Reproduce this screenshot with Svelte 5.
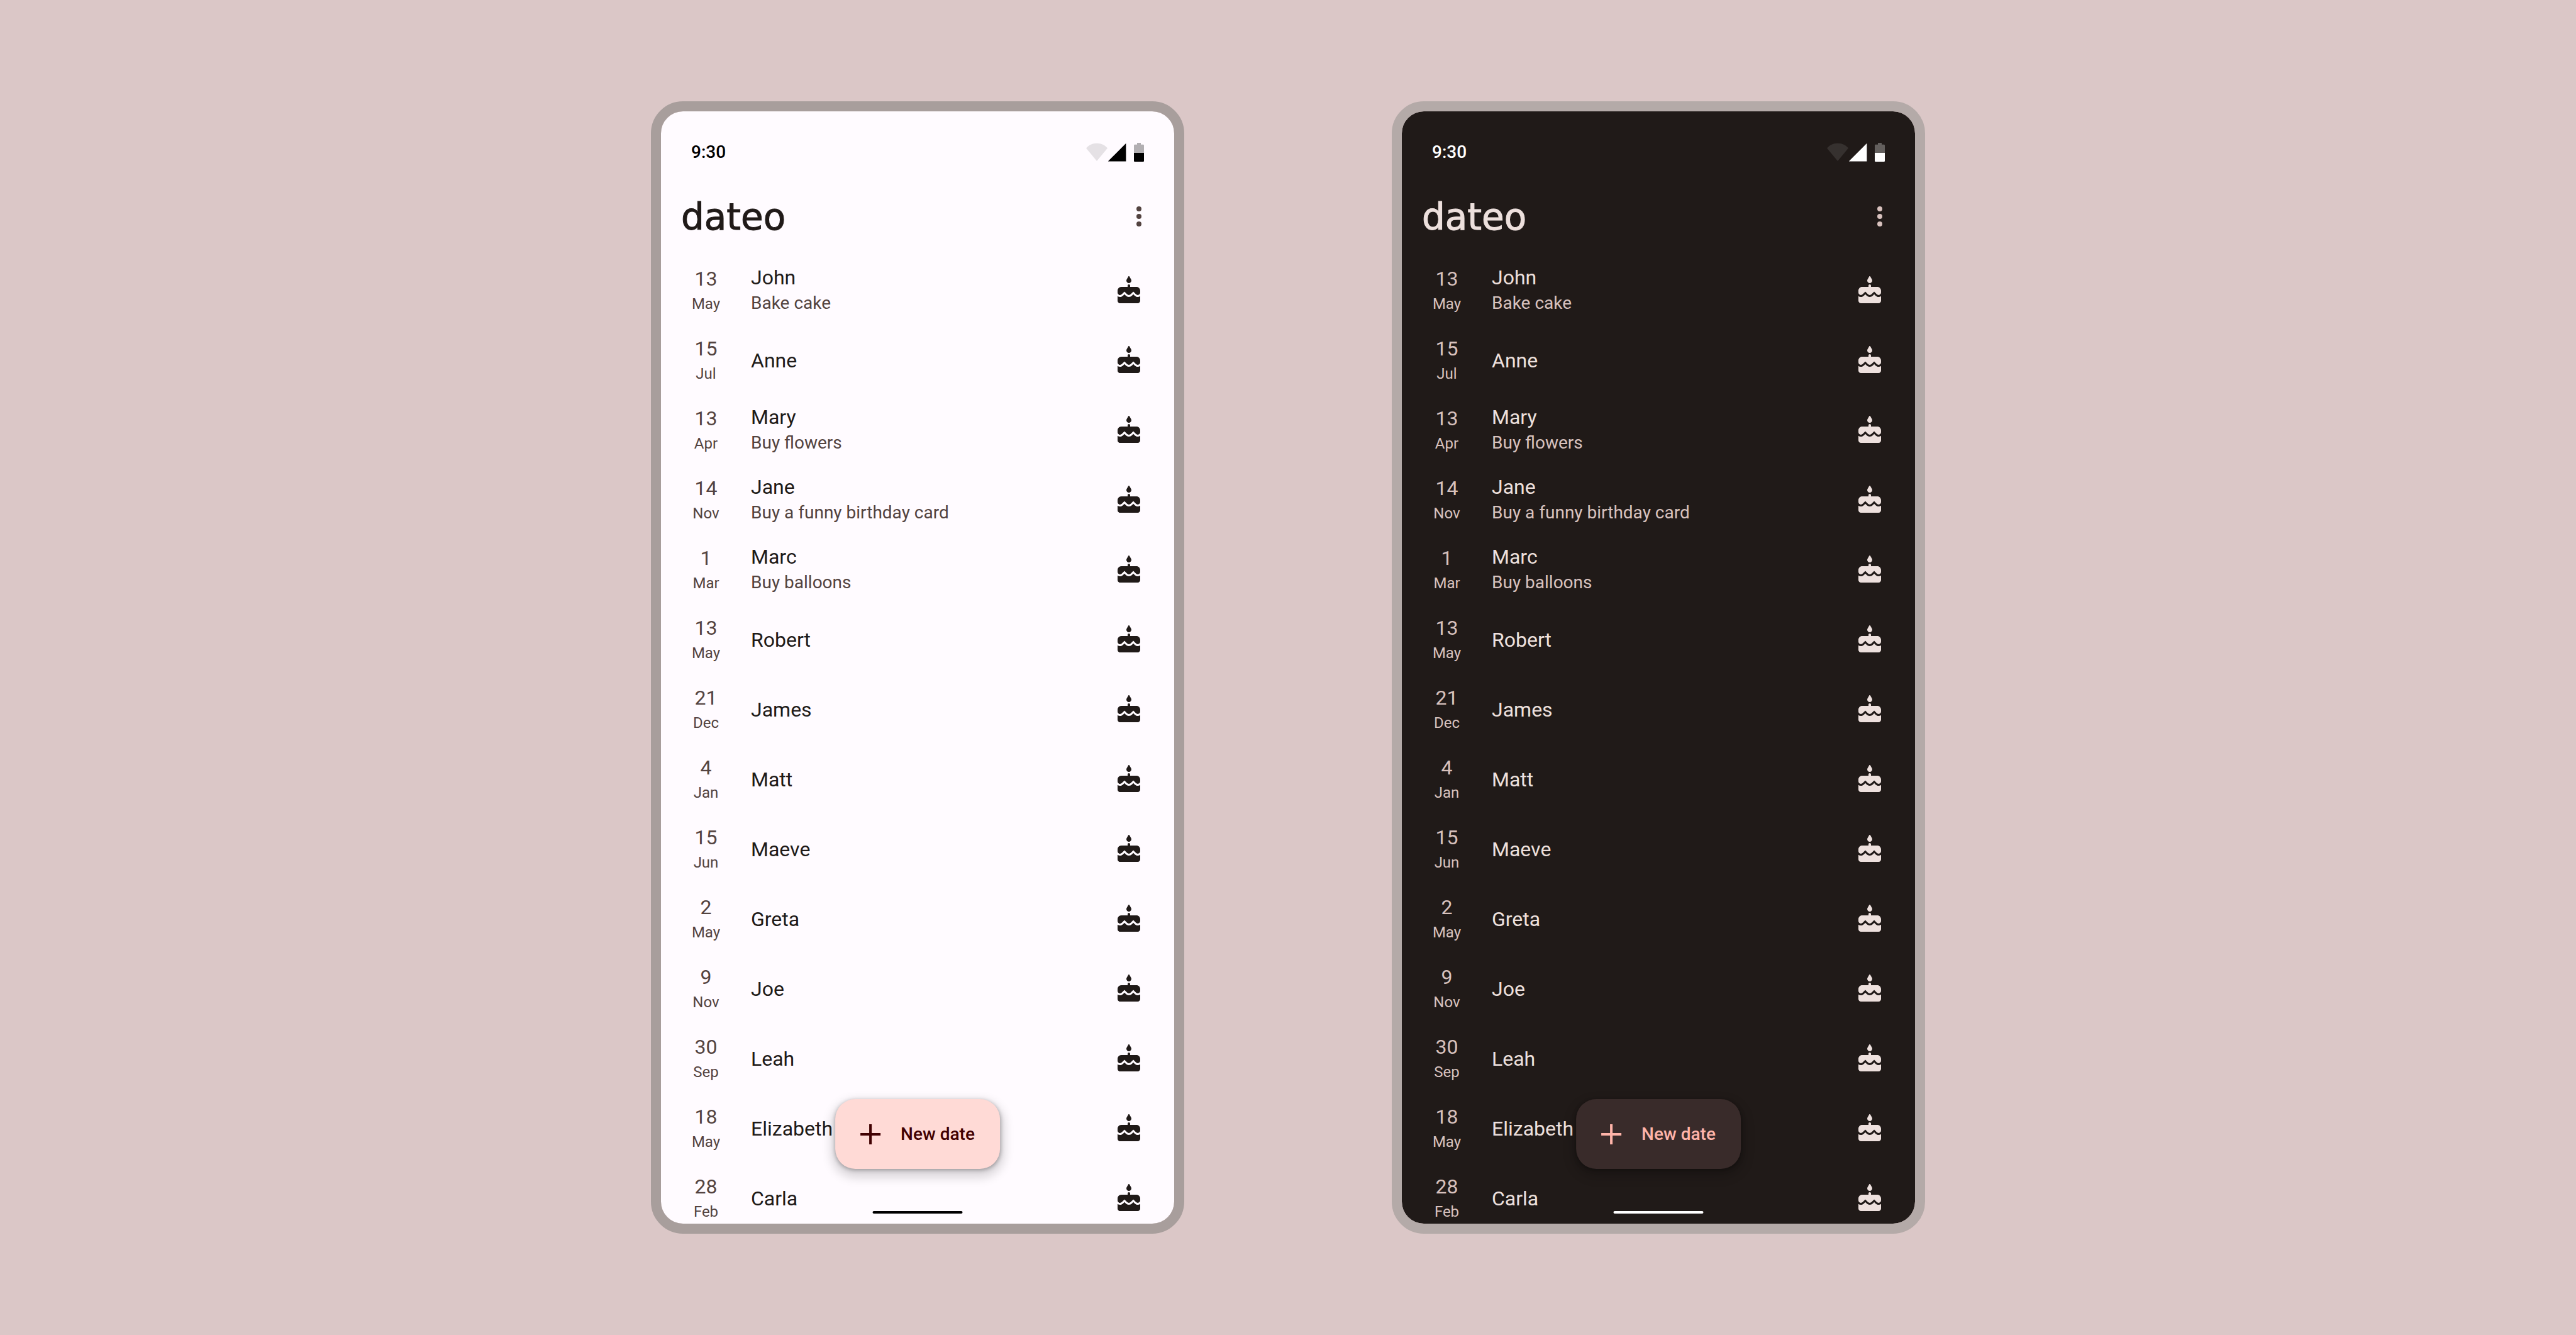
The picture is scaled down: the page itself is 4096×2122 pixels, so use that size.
<script>
  const dates = [
    { day: 13, month: 'May', name: 'John', note: 'Bake cake' },
    { day: 15, month: 'Jul', name: 'Anne' },
    { day: 13, month: 'Apr', name: 'Mary', note: 'Buy flowers' },
    { day: 14, month: 'Nov', name: 'Jane', note: 'Buy a funny birthday card' },
    { day: 1, month: 'Mar', name: 'Marc', note: 'Buy balloons' },
    { day: 13, month: 'May', name: 'Robert' },
    { day: 21, month: 'Dec', name: 'James' },
    { day: 4, month: 'Jan', name: 'Matt' },
    { day: 15, month: 'Jun', name: 'Maeve' },
    { day: 2, month: 'May', name: 'Greta' },
    { day: 9, month: 'Nov', name: 'Joe' },
    { day: 30, month: 'Sep', name: 'Leah' },
    { day: 18, month: 'May', name: 'Elizabeth' },
    { day: 28, month: 'Feb', name: 'Carla' }
  ];
  const themes = ['light', 'dark'];
</script>

<main class="stage">
  {#each themes as theme}
    <section class="phone {theme}" aria-label="dateo, {theme} theme">
      <div class="status">
        <span class="time">9:30</span>
        <svg class="indicators" viewBox="0 0 46 15" aria-hidden="true">
          <path opacity=".1" d="M8.5 14.5 0 4.3C1.8 2 4.8.4 8.5.4S15.200 2 17 4.300Z" />
          <path d="M17.400 14.700 31.700.400V14.700Z" />
          <path opacity=".3" d="M38 8.050V2.200c0-.5.3-.8.8-.8h1.700V0h3v1.400h1.700c.5 0 .8.3.8.8v5.850Z" />
          <path d="M38 8.050h8v6.150c0 .5-.3.8-.8.8h-6.400c-.5 0-.8-.3-.8-.8Z" />
        </svg>
      </div>

      <header class="bar">
        <h1>dateo</h1>
        <button class="more" type="button" aria-label="More options">
          <svg viewBox="0 0 24 24" aria-hidden="true">
            <circle cx="12" cy="6" r="2" />
            <circle cx="12" cy="12" r="2" />
            <circle cx="12" cy="18" r="2" />
          </svg>
        </button>
      </header>

      <ul class="list">
        {#each dates as item}
          <li class="row">
            <div class="date">
              <span class="day">{item.day}</span>
              <span class="month">{item.month}</span>
            </div>
            <div class="text">
              <span class="name">{item.name}</span>
              {#if item.note}<span class="note">{item.note}</span>{/if}
            </div>
            <svg class="cake" viewBox="0 0 24 24" aria-hidden="true">
              <path d="M12 6c1.110 0 2-.9 2-2 0-.38-.1-.73-.29-1.030L12.430.750c-.19-.33-.67-.33-.86 0l-1.280 2.220C10.100 3.270 10 3.620 10 4c0 1.100.9 2 2 2z" />
              <path d="M18 9h-5V8c0-.55-.45-1-1-1s-1 .45-1 1v1H6c-1.660 0-3 1.340-3 3v1.540c0 1.080.88 1.960 1.960 1.960.52 0 1.020-.2 1.380-.57l2.140-2.130 2.130 2.130c.74.74 2.030.74 2.770 0l2.140-2.130 2.130 2.130c.37.37.86.57 1.380.57 1.080 0 1.960-.88 1.960-1.960V12c0-1.660-1.340-3-3-3z" />
              <path d="M16.600 15.990l-1.070-1.070-1.080 1.070c-1.300 1.300-3.580 1.310-4.890 0l-1.070-1.070-1.090 1.070C6.750 16.640 5.880 17 4.960 17c-.73 0-1.400-.23-1.960-.61V20c0 1.100.9 2 2 2h14c1.100 0 2-.9 2-2v-3.610c-.56.38-1.230.61-1.960.61-.92 0-1.790-.36-2.440-1.010z" />
            </svg>
          </li>
        {/each}
      </ul>

      <button class="fab" type="button">
        <svg viewBox="0 0 24 24" aria-hidden="true">
          <path d="M11 4h2v7h7v2h-7v7h-2v-7H4v-2h7z" />
        </svg>
        <span>New date</span>
      </button>
      <div class="home"></div>
    </section>
  {/each}
</main>

<style>
  :global(body) {
    background: #dbc7c7;
  }

  .stage {
    box-sizing: border-box;
    min-height: 100vh;
    display: grid;
    grid-template-columns: repeat(2, minmax(0, 848px));
    justify-content: center;
    align-content: center;
    gap: 330px;
    font-family: Roboto, 'Liberation Sans', sans-serif;
  }

  .light {
    --frame: #a89e9c;
    --surface: #fffbff;
    --ink: #201a18;
    --muted: #534340;
    --system: #000000;
    --fab: #ffdad6;
    --on-fab: #410001;
  }

  .dark {
    --frame: #b4aaa8;
    --surface: #201a18;
    --ink: #ede0dd;
    --muted: #d8c2be;
    --system: #ffffff;
    --fab: #392b2a;
    --on-fab: #ffb4a9;
  }

  .phone {
    position: relative;
    display: flex;
    flex-direction: column;
    overflow: hidden;
    border: 16px solid var(--frame);
    border-radius: 51px;
    background: var(--surface);
    background-clip: padding-box;
    color: var(--ink);
  }

  .status {
    box-sizing: border-box;
    height: 103px;
    padding: 26px 48px 0;
    display: flex;
    align-items: center;
    justify-content: space-between;
    color: var(--system);
  }

  .time {
    font-size: 28px;
    line-height: 40px;
    font-weight: 500;
  }

  svg {
    display: block;
    flex: none;
    fill: currentColor;
  }

  .indicators {
    width: 92px;
    height: 30px;
  }

  .bar {
    height: 127px;
    padding: 0 32px;
    display: flex;
    align-items: center;
    justify-content: space-between;
  }

  h1 {
    margin: 0;
    padding-top: 2px;
    font-family: 'DejaVu Sans', sans-serif;
    font-size: 58px;
    line-height: 72px;
    font-weight: 400;
    -webkit-text-stroke: 1px currentColor;
  }

  button {
    border: 0;
    font: inherit;
    cursor: pointer;
  }

  .more {
    padding: 0;
    background: none;
    color: var(--muted);
  }

  .more svg,
  .cake,
  .fab svg {
    width: 48px;
    height: 48px;
  }

  /* The last row runs under the bottom edge of the screen. */
  .list {
    margin: 0 0 -16px;
    padding: 0;
    list-style: none;
  }

  .row {
    box-sizing: border-box;
    height: 111px;
    padding: 0 48px 2px 32px;
    display: flex;
    align-items: center;
    gap: 32px;
  }

  .date {
    flex: none;
    width: 79px;
    display: flex;
    flex-direction: column;
    align-items: center;
    color: var(--muted);
  }

  .day {
    font-size: 32px;
    line-height: 42px;
  }

  .month {
    font-size: 24px;
    line-height: 38px;
  }

  .text {
    flex: 1;
    min-width: 0;
    display: flex;
    flex-direction: column;
  }

  .name {
    font-size: 32px;
    line-height: 40px;
  }

  .note {
    font-size: 28px;
    line-height: 42px;
    color: var(--muted);
  }

  .fab {
    position: absolute;
    bottom: 87px;
    left: 50%;
    transform: translateX(-50%);
    height: 111px;
    padding: 0 40px 0 32px;
    display: flex;
    align-items: center;
    gap: 24px;
    border-radius: 32px;
    background: var(--fab);
    color: var(--on-fab);
    font-size: 28px;
    line-height: 40px;
    font-weight: 500;
    white-space: nowrap;
    box-shadow:
      0 2px 6px rgba(0, 0, 0, 0.3),
      0 8px 16px 6px rgba(0, 0, 0, 0.15);
  }

  .home {
    position: absolute;
    bottom: 16px;
    left: 50%;
    transform: translateX(-50%);
    width: 143px;
    height: 4px;
    border-radius: 2px;
    background: var(--system);
  }
</style>
